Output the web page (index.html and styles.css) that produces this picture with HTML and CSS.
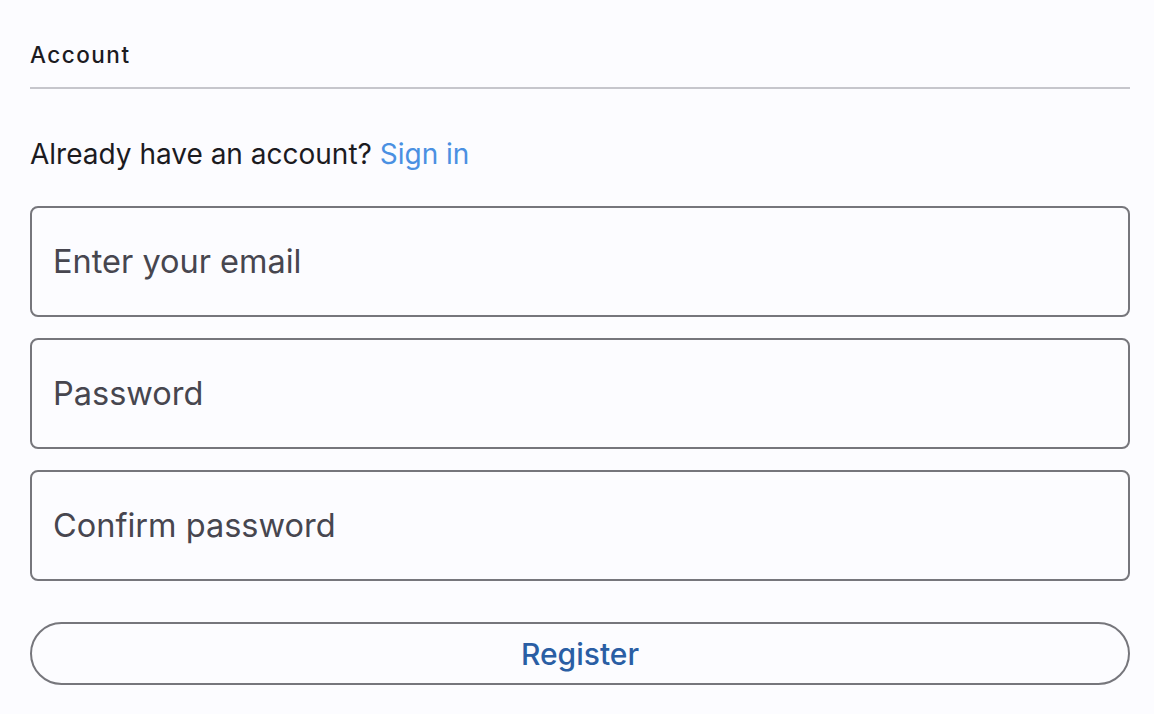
FILE: index.html
```html
<!DOCTYPE html>
<html>
<head>
<meta charset="utf-8">
<link rel="stylesheet" href="styles.css">
</head>
<body>
<div class="page">
  <div class="header">Account</div>
  <p class="prompt">Already have an account? <a class="link" href="#">Sign in</a></p>
  <form class="form">
    <input class="field" type="email" placeholder="Enter your email">
    <input class="field" type="password" placeholder="Password">
    <input class="field" type="password" placeholder="Confirm password">
    <button class="btn" type="button">Register</button>
  </form>
</div>
</body>
</html>
```
FILE: styles.css
```css
html, body {
  margin: 0;
  padding: 0;
  background: #fcfcff;
}
body {
  font-family: Inter, "Noto Sans", sans-serif;
  color: #1c1b1f;
}
.page {
  padding: 0 24px 0 30px;
  display: flex;
  flex-direction: column;
}
.header {
  font-size: 22.5px;
  font-weight: 500;
  letter-spacing: 1.5px;
  padding-top: 41px;
  padding-bottom: 18px;
  border-bottom: 2px solid #c6c6cc;
  line-height: 28px;
}
.prompt {
  margin: 47px 0 0 0;
  font-size: 28px;
  line-height: 36px;
}
.link {
  color: #4a90e2;
  text-decoration: none;
}
.form {
  margin-top: 34px;
  display: flex;
  flex-direction: column;
  gap: 21px;
}
.field {
  box-sizing: border-box;
  height: 111px;
  border: 2px solid #76767c;
  border-radius: 8px;
  background: #fcfcff;
  padding: 0 21px;
  font-family: Inter, "Noto Sans", sans-serif;
  font-size: 32.5px;
  color: #1c1b1f;
  outline: none;
}
.field::placeholder {
  color: #47464f;
}
.btn {
  margin-top: 20px;
  box-sizing: border-box;
  height: 63px;
  border: 2px solid #76767c;
  border-radius: 32px;
  background: #fcfcff;
  font-family: Inter, "Noto Sans", sans-serif;
  font-size: 30px;
  font-weight: 500;
  color: #2a5ea4;
}
```
